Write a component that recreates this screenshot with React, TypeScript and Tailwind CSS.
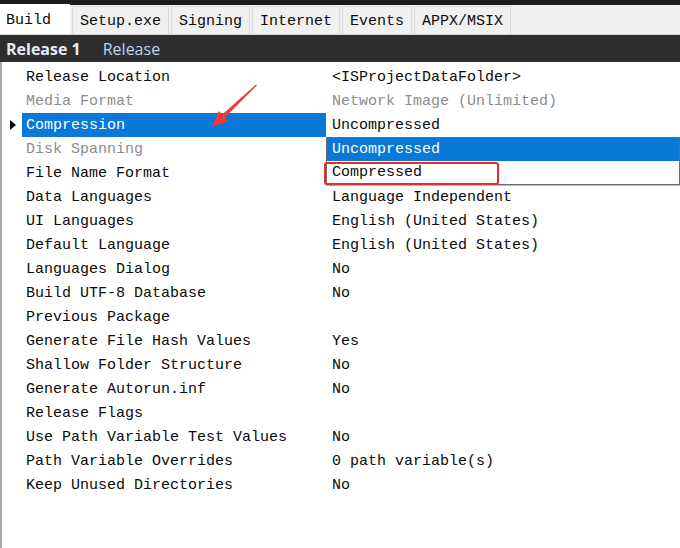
import React from 'react';

interface Prop {
    label: string;
    value?: string;
    disabled?: boolean;
    selected?: boolean;
}

const PROPS: Prop[] = [
    { label: 'Release Location', value: '<ISProjectDataFolder>' },
    { label: 'Media Format', value: 'Network Image (Unlimited)', disabled: true },
    { label: 'Compression', value: 'Uncompressed', selected: true },
    { label: 'Disk Spanning', disabled: true },
    { label: 'File Name Format' },
    { label: 'Data Languages', value: 'Language Independent' },
    { label: 'UI Languages', value: 'English (United States)' },
    { label: 'Default Language', value: 'English (United States)' },
    { label: 'Languages Dialog', value: 'No' },
    { label: 'Build UTF-8 Database', value: 'No' },
    { label: 'Previous Package' },
    { label: 'Generate File Hash Values', value: 'Yes' },
    { label: 'Shallow Folder Structure', value: 'No' },
    { label: 'Generate Autorun.inf', value: 'No' },
    { label: 'Release Flags' },
    { label: 'Use Path Variable Test Values', value: 'No' },
    { label: 'Path Variable Overrides', value: '0 path variable(s)' },
    { label: 'Keep Unused Directories', value: 'No' },
];

const TABS = ['Setup.exe', 'Signing', 'Internet', 'Events', 'APPX/MSIX'];

function PropRow({ prop }: { prop: Prop }) {
    const text = prop.disabled ? 'text-[#8c8c8c]' : 'text-[#0a0a0a]';
    return (
        <div className="flex h-[24px] items-center">
            <div className="flex w-[20px] items-center justify-center pl-[2px]">
                {prop.selected && (
                    <svg width="8" height="12" viewBox="0 0 8 12">
                        <path d="M1 1 L7 6 L1 11 Z" fill="#000" />
                    </svg>
                )}
            </div>
            <div
                className={
                    'flex h-full w-[304px] items-center pl-[4px] ' +
                    (prop.selected ? 'bg-[#0a78d7] text-white' : text)
                }
            >
                {prop.label}
            </div>
            <div className={'pl-[6px] ' + text}>{prop.value}</div>
        </div>
    );
}

export default function App() {
    return (
        <div
            className="relative h-[548px] w-[680px] overflow-hidden bg-white text-[15px] leading-none"
            style={{ fontFamily: '"Liberation Mono", "DejaVu Sans Mono", monospace' }}
        >
            <div className="h-[5px] bg-[#1c1c1c]" />

            {/* tabs */}
            <div className="flex h-[30px] items-end border-b border-[#d6d6d6] bg-[#f0f0f0]">
                <div className="flex h-[30px] w-[70px] items-center bg-white pl-[6px] pt-[2px] text-[#0a0a0a]">
                    Build
                </div>
                {TABS.map((tab) => (
                    <div
                        key={tab}
                        className="ml-[2px] flex h-[28px] items-center border border-b-0 border-[#dadada] bg-[#f0f0f0] px-[7px] pt-[1px] text-[#0a0a0a]"
                    >
                        {tab}
                    </div>
                ))}
            </div>

            {/* release header */}
            <div
                className="flex h-[27px] items-center bg-[#2e2e2e] pl-[6px] text-[16px]"
                style={{ fontFamily: '"Open Sans", "Noto Sans", sans-serif' }}
            >
                <span className="font-bold text-[#e4edf7]">Release 1</span>
                <span className="ml-[22px] text-[#bcd3ec]">Release</span>
            </div>

            {/* property grid */}
            <div className="h-full border-l-2 border-[#a8a8a8] pt-[3px]">
                {PROPS.map((p) => (
                    <PropRow key={p.label} prop={p} />
                ))}
            </div>

            {/* open combo list */}
            <div className="absolute left-[326px] top-[137px] w-[354px] border border-[#6b6b6b] bg-white shadow-[0_1px_0_#bdbdbd]">
                <div className="flex h-[23px] items-center bg-[#0a78d7] pl-[5px] text-white">
                    Uncompressed
                </div>
                <div className="flex h-[23px] items-center pl-[5px] text-[#0a0a0a]">
                    Compressed
                </div>
            </div>

            {/* annotations */}
            <div className="absolute left-[324px] top-[162px] h-[23px] w-[175px] rounded-[3px] border-2 border-[#ee2a2a]" />
            <svg className="absolute left-0 top-0" width="680" height="548">
                <polygon
                    points="212,127 218.8,110.9 222.2,114.6 256,84.5 256.8,85.5 225,117.4 228.4,121.1"
                    fill="#f23a2e"
                />
            </svg>
        </div>
    );
}
